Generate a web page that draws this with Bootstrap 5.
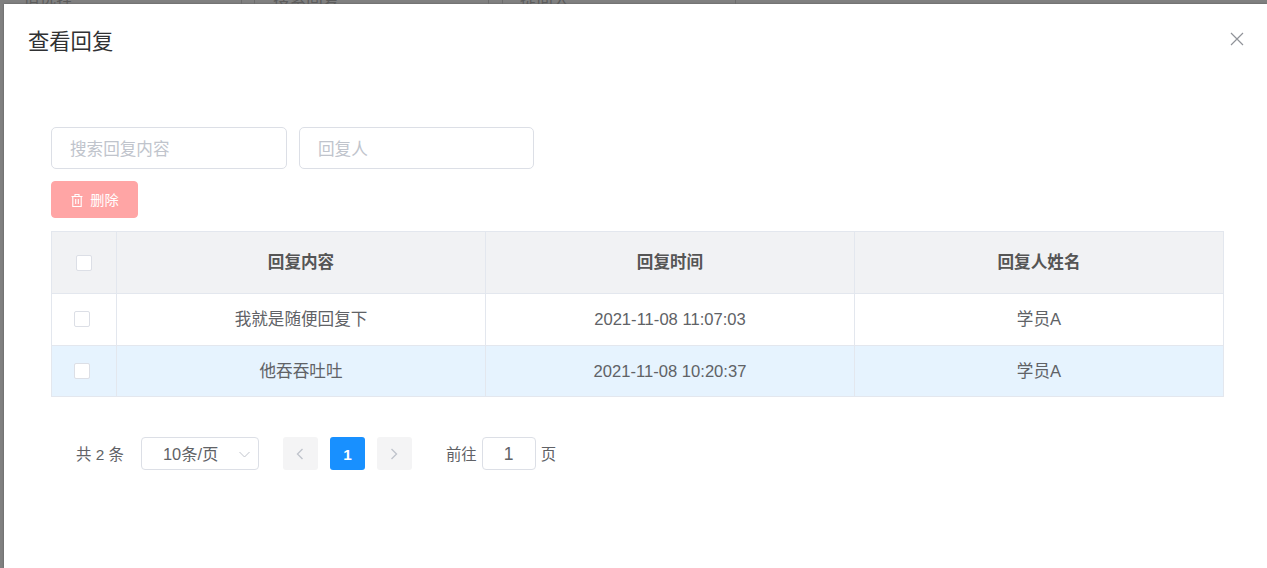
<!DOCTYPE html>
<html lang="zh-CN">
<head>
<meta charset="utf-8">
<title>查看回复</title>
<link href="https://cdn.jsdelivr.net/npm/bootstrap@5.3.0/dist/css/bootstrap.min.css" rel="stylesheet">
<style>
html,body{height:100%;overflow:hidden}
body{background:#808080;font-family:"Liberation Sans","Noto Sans CJK SC",sans-serif;color:#606266}
.shade-strip{height:4px;overflow:hidden;color:#5c5c5c;font-size:16.6px;background:#808080}
.shade-cell{border-right:1px solid #6c6c6c;height:4px;line-height:2px;flex:none}
.dlg{margin-left:4px;height:564px;background:#fff;box-shadow:0 0 2px rgba(0,0,0,.3)}
.dlg-head{height:76px;padding:24px 24px 0 24px}
.dlg-title{font-size:21.3px;line-height:28px;color:#303133;margin:0;font-weight:400}
.dlg-x{width:14px;height:14px;margin-top:4px;margin-right:-1px}
.dlg-body{padding:47px 44px 0 47px}
.fld{height:42px;border:1px solid #dcdfe6;border-radius:5px;padding:3px 18px 0;font-size:16.6px;color:#606266;background:#fff;outline:0}
.fld-a{width:236px}
.fld-b{width:235px}
.fld::placeholder{color:#c0c4cc;opacity:1}
.btn-del{width:87px;height:37px;background:#ffa5a5;border:1px solid #ffa5a5;border-radius:4px;color:#fff;font-size:14.2px;margin-top:12px;padding:2px 0 0}
.grid{width:1172px;margin-top:13px;border-collapse:collapse;table-layout:fixed;font-size:16.6px}
.grid th,.grid td{border:1px solid #e3e7ee;text-align:center;vertical-align:middle;padding:1px 0 0}
.grid th{height:62px;background:#f1f2f4;font-weight:700;color:#555;padding-top:2px}
.grid td{height:52px;background:#fff;color:#606266}
.grid tr.hot td{background:#e6f3fe;height:51px;padding-top:2px}
.grid th .tick{margin-top:-2px}
.tick{display:block;width:16px;height:16px;border:1px solid #dcdfe6;border-radius:2px;background:#fff}
.tick-row{margin-left:22px;margin-top:-2px}
.pager{margin-top:40px;padding-left:25px;height:33px;font-size:15.4px;color:#606266}
.ptxt{padding-top:2px}
.sel{width:118px;height:33px;border:1px solid #dcdfe6;border-radius:4px;margin-left:17px;padding:2px 8px 0 21px;font-size:16.4px}
.pg{width:35px;height:33px;border-radius:3px;background:#f4f4f5;font-size:15.4px}
.pg-on{background:#1890ff;color:#fff;font-weight:700;padding-top:2px}
.jump{width:54px;height:33px;border:1px solid #dcdfe6;border-radius:4px;margin:0 5px;color:#606266;font-size:17.5px;padding-top:2px}
</style>
</head>
<body>
<div class="shade-strip d-flex" aria-hidden="true">
  <div class="shade-cell" style="width:242px;padding-left:23px">请选择</div>
  <div class="shade-cell" style="width:13px"></div>
  <div class="shade-cell" style="width:234px;padding-left:18px">搜索回复</div>
  <div class="shade-cell" style="width:14px"></div>
  <div class="shade-cell" style="width:233px;padding-left:17px">提问人</div>
</div>
<div class="dlg">
  <div class="dlg-head d-flex justify-content-between align-items-start">
    <h5 class="dlg-title">查看回复</h5>
    <svg class="dlg-x" viewBox="0 0 14 14" fill="none" stroke="#909399" stroke-width="1.2"><path d="M1 1l12 12M13 1L1 13"/></svg>
  </div>
  <div class="dlg-body">
    <div class="d-flex" style="gap:12px">
      <input class="fld fld-a" type="text" placeholder="搜索回复内容">
      <input class="fld fld-b" type="text" placeholder="回复人">
    </div>
    <button class="btn-del d-flex align-items-center justify-content-center" type="button">
      <svg width="14" height="15" viewBox="0 0 14 15" fill="none" stroke="#fff" stroke-width="1.1" style="margin-right:6px"><path d="M1.5 3.5h11M5 3.5V1.5h4v2M2.8 3.5v10h8.4v-10M5.7 6v5M8.3 6v5"/></svg>
      <span>删除</span>
    </button>
    <table class="grid">
      <colgroup><col style="width:65px"><col style="width:369px"><col style="width:369px"><col style="width:369px"></colgroup>
      <thead>
        <tr><th><span class="tick mx-auto"></span></th><th>回复内容</th><th>回复时间</th><th>回复人姓名</th></tr>
      </thead>
      <tbody>
        <tr><td><span class="tick tick-row"></span></td><td>我就是随便回复下</td><td>2021-11-08 11:07:03</td><td>学员A</td></tr>
        <tr class="hot"><td><span class="tick tick-row"></span></td><td>他吞吞吐吐</td><td>2021-11-08 10:20:37</td><td>学员A</td></tr>
      </tbody>
    </table>
    <div class="pager d-flex align-items-center">
      <span class="ptxt">共 2 条</span>
      <div class="sel d-flex align-items-center justify-content-between">
        <span>10条/页</span>
        <svg width="11" height="7" viewBox="0 0 11 7" fill="none" stroke="#c0c4cc" stroke-width="1"><path d="M.5 1l5 5 5-5"/></svg>
      </div>
      <div class="pg d-flex align-items-center justify-content-center" style="margin-left:24px">
        <svg width="8" height="12" viewBox="0 0 8 12" fill="none" stroke="#c0c4cc" stroke-width="1.4"><path d="M6.5 1L1.5 6l5 5"/></svg>
      </div>
      <div class="pg pg-on d-flex align-items-center justify-content-center" style="margin-left:12px">1</div>
      <div class="pg d-flex align-items-center justify-content-center" style="margin-left:12px">
        <svg width="8" height="12" viewBox="0 0 8 12" fill="none" stroke="#c0c4cc" stroke-width="1.4"><path d="M1.5 1l5 5-5 5"/></svg>
      </div>
      <span class="ptxt" style="margin-left:34px">前往</span>
      <div class="jump d-flex align-items-center justify-content-center">1</div>
      <span class="ptxt">页</span>
    </div>
  </div>
</div>
<script src="https://cdn.jsdelivr.net/npm/bootstrap@5.3.0/dist/js/bootstrap.bundle.min.js"></script>
</body>
</html>
